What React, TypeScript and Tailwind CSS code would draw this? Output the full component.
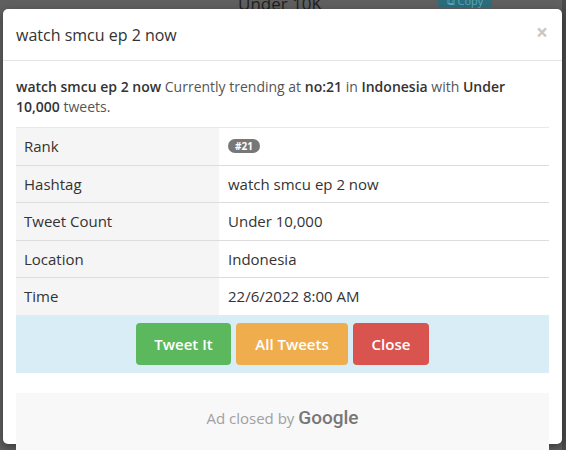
import React from "react";

const font = { fontFamily: '"Open Sans", "Noto Sans", sans-serif' };

const rows: { label: string; value: React.ReactNode }[] = [
  {
    label: "Rank",
    value: (
      <span className="inline-flex h-[14px] items-center rounded-full bg-[#777] px-[7px] text-[10px] font-bold leading-none text-white">
        #21
      </span>
    ),
  },
  { label: "Hashtag", value: "watch smcu ep 2 now" },
  { label: "Tweet Count", value: "Under 10,000" },
  { label: "Location", value: "Indonesia" },
  { label: "Time", value: "22/6/2022 8:00 AM" },
];

export default function App() {
  return (
    <div className="relative h-[450px] w-[566px] overflow-hidden bg-[#5f5f5f]" style={font}>
      {/* page behind the overlay */}
      <div className="absolute left-[238px] top-[-9px] text-[17px] text-[#1e1e1e]">Under 10K</div>
      <div className="absolute left-[438px] top-[-6px] flex h-[13px] w-[54px] items-end justify-center rounded-[2px] bg-[#2b6d7c] pb-[1px] text-[11px] leading-none text-[#5aa6b6]">
        ⧉ Copy
      </div>
      <div className="absolute right-0 top-0 h-[450px] w-[4px] bg-[#4a4a4a]" />

      {/* modal */}
      <div className="absolute left-[3px] top-[9px] h-[435px] w-[559px] rounded-[5px] bg-white shadow-[0_3px_9px_rgba(0,0,0,0.4)]">
        <div className="flex h-[52px] items-center justify-between border-b border-[#e5e5e5] pl-[13px] pr-[14px]">
          <h4 className="text-[16px] text-[#333]">watch smcu ep 2 now</h4>
          <span className="mt-[-4px] text-[21px] font-bold leading-none text-[#c8c8c8]">×</span>
        </div>

        <div className="pl-[13px] pr-[13px] pt-[16px]">
          <p className="mb-[10px] text-[14px] leading-[20px] text-[#555]">
            <b className="font-semibold text-[#333]">watch smcu ep 2 now</b> Currently trending at{" "}
            <b className="font-semibold text-[#333]">no:21</b> in{" "}
            <b className="font-semibold text-[#333]">Indonesia</b> with{" "}
            <b className="font-semibold text-[#333]">Under 10,000</b> tweets.
          </p>

          <div className="w-[533px] text-[15px] text-[#333]">
            {rows.map((r, i) => (
              <div
                key={r.label}
                className={`grid h-[37.6px] grid-cols-[203px_1fr] ${i === 0 ? "border-t border-[#e8e8e8]" : "border-t border-[#dddddd]"}`}
              >
                <div className="flex items-center bg-[#f5f5f5] px-[8px]">{r.label}</div>
                <div className="flex items-center px-[9px]">{r.value}</div>
              </div>
            ))}
            <div className="flex h-[58px] items-center justify-center gap-[5px] bg-[#d9edf7]">
              <button className="h-[42px] w-[95px] rounded-[4px] bg-[#5cb85c] text-[15px] font-semibold text-white">
                Tweet It
              </button>
              <button className="h-[42px] w-[112px] rounded-[4px] bg-[#f0ad4e] text-[15px] font-semibold text-white">
                All Tweets
              </button>
              <button className="h-[42px] w-[76px] rounded-[4px] bg-[#d9534f] text-[15px] font-semibold text-white">
                Close
              </button>
            </div>
          </div>

          <div className="mt-[20px] flex h-[80px] w-[533px] items-start justify-center bg-[#f9f8f9] pt-[11px]">
            <span className="text-[15px] text-[#a0a0a0]">
              Ad closed by{" "}
              <span
                className="text-[19px] font-medium text-[#777]"
                style={{ fontFamily: '"Roboto", "Open Sans", sans-serif' }}
              >
                Google
              </span>
            </span>
          </div>
        </div>
      </div>
    </div>
  );
}
